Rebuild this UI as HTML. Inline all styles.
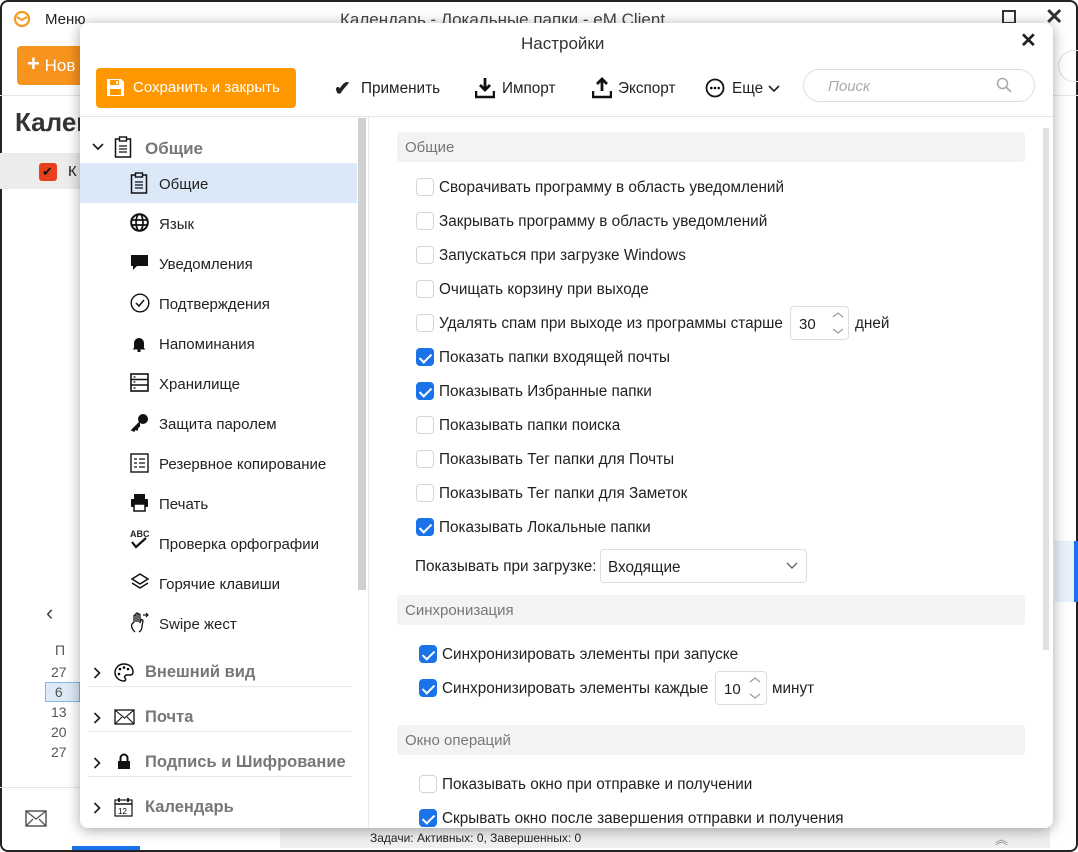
<!DOCTYPE html>
<html><head><meta charset="utf-8"><style>
*{box-sizing:border-box;margin:0;padding:0}
body{width:1078px;height:852px;position:relative;overflow:hidden;background:#fff;font-family:"Liberation Sans","Noto Sans CJK SC",sans-serif;color:#222;font-size:15px}
.a{position:absolute;white-space:nowrap}
.cb{position:absolute;width:18px;height:18px;border:1px solid #d4d4d4;border-radius:4px;background:#fff}
.cb.on{background:#1a73e8;border-color:#1a73e8}
.cb.on:after{content:"";position:absolute;left:5px;top:1.5px;width:5px;height:10px;border:solid #fff;border-width:0 2.2px 2.2px 0;transform:rotate(45deg)}
.sec{position:absolute;left:397px;width:628px;height:30px;background:#f3f3f3;border-radius:3px;color:#777;font-size:15px;padding:7px 8px}
.ni{position:absolute;left:159px;font-size:15px}
.ic{position:absolute;left:130px}
.grp{position:absolute;left:145px;font-size:17px;color:#777;font-weight:bold}
.gl{position:absolute;left:88px;width:264px;height:1px;background:#e6e6e6}
.sp{position:absolute;width:52px;height:34px;border:1px solid #ddd;border-radius:4px;padding:9px 0 0 8px;font-size:15px;background:#fff}
.t{font-size:15.3px}
</style></head><body>
<!-- background app -->
<div class="a" style="left:0;top:0;width:1078px;height:852px;border:2px solid #222;border-radius:8px"></div>
<svg class="a" style="left:13px;top:10px" width="18" height="18" viewBox="0 0 18 18"><circle cx="9" cy="9" r="7" fill="none" stroke="#f29b1f" stroke-width="2.2"/><path d="M4 7l5 3 5-3" fill="none" stroke="#f29b1f" stroke-width="2"/></svg>
<div class="a" style="left:45px;top:11px;font-size:15px">Меню</div>
<div class="a" style="left:340px;top:10px;font-size:17px;color:#444">Календарь - Локальные папки - eM Client</div>
<div class="a" style="left:1002px;top:10px;width:14px;height:14px;border:2px solid #333"></div>
<div class="a" style="left:1045px;top:4px;font-size:22px;font-weight:bold;color:#333">✕</div>
<div class="a" style="left:17px;top:46px;width:70px;height:39px;background:#f7941d;border-radius:4px;color:#fff;font-size:17px;padding:10px 0 0 10px"><b style="font-size:22px;line-height:14px">+</b> Нов</div>
<div class="a" style="left:0;top:95px;width:80px;height:1px;background:#e5e5e5"></div>
<div class="a" style="left:15px;top:107px;font-size:26px;font-weight:bold;color:#333">Кален</div>
<div class="a" style="left:0;top:153px;width:80px;height:36px;background:#ececec"></div>
<div class="a" style="left:39px;top:163px;width:18px;height:18px;background:#e8401c;border-radius:3px;color:#111;font-size:13px;padding-left:3px;line-height:18px">✔</div>
<div class="a" style="left:68px;top:163px;font-size:15px">К</div>
<div class="a" style="left:46px;top:600px;font-size:22px;color:#444">‹</div>
<div class="a" style="left:55px;top:642px;font-size:14px;color:#555">П</div>
<div class="a" style="left:45px;top:682px;width:35px;height:20px;background:#dce9f7;border:1px solid #8ab4e8"></div>
<div class="a" style="left:51px;top:662px;font-size:14px;color:#555;line-height:20px">27<br>&nbsp;6<br>13<br>20<br>27</div>
<div class="a" style="left:0;top:787px;width:80px;height:1px;background:#e5e5e5"></div>
<svg class="a" style="left:25px;top:810px" width="22" height="18"><rect x="1" y="1" width="20" height="15" fill="none" stroke="#555" stroke-width="1.5"/><path d="M1 1l10 8 10-8M1 16l7-7M21 16l-7-7" fill="none" stroke="#555" stroke-width="1.3"/></svg>
<div class="a" style="left:72px;top:846px;width:68px;height:4px;background:#1a73e8"></div>
<div class="a" style="left:280px;top:826px;width:770px;height:22px;background:#f0f0f0;border-top:1px solid #ddd"></div>
<div class="a" style="left:370px;top:831px;font-size:12px;color:#222">Задачи: Активных: 0, Завершенных: 0</div>
<div class="a" style="left:995px;top:829px;font-size:13px;color:#888">︽</div>
<div class="a" style="left:1053px;top:95px;width:25px;height:1px;background:#e5e5e5"></div>
<div class="a" style="left:1058px;top:50px;width:20px;height:32px;border:1px solid #ddd;border-right:none;border-radius:16px 0 0 16px"></div>
<div class="a" style="left:1055px;top:541px;width:23px;height:61px;background:#e8f0fb;border-right:4px solid #1a73e8"></div>
<!-- dialog -->
<div class="a" style="left:80px;top:23px;width:973px;height:805px;background:#fff;border-radius:8px;box-shadow:0 2px 14px rgba(0,0,0,.35)"></div>
<div class="a" style="left:521px;top:34px;font-size:17px;color:#333">Настройки</div>
<div class="a" style="left:1020px;top:28px;font-size:20px;font-weight:bold;color:#222">✕</div>
<div class="a" style="left:96px;top:68px;width:200px;height:40px;background:#ff9800;border-radius:4px;color:#fff;font-size:15px;padding:11px 0 0 37px">Сохранить и закрыть</div>
<svg class="a" style="left:106px;top:78px" width="19" height="19" viewBox="0 0 19 19"><path d="M1 1h14l3 3v14H1z" fill="#fff"/><rect x="4" y="2" width="9" height="5" fill="#ff9800"/><rect x="4" y="11" width="11" height="6" fill="#ff9800"/><rect x="10" y="3" width="2" height="3" fill="#fff"/></svg>
<div class="a" style="left:334px;top:76px;font-size:20px;font-weight:bold">✔</div>
<div class="a t" style="left:361px;top:80px">Применить</div>
<svg class="a" style="left:475px;top:77px" width="20" height="22"><path d="M10 1v11M5 8l5 5 5-5" fill="none" stroke="#111" stroke-width="2.8"/><path d="M1 14v6h18v-6" fill="none" stroke="#111" stroke-width="2.5"/></svg>
<div class="a t" style="left:502px;top:80px">Импорт</div>
<svg class="a" style="left:592px;top:77px" width="20" height="22"><path d="M10 14V3M5 7l5-5 5 5" fill="none" stroke="#111" stroke-width="2.8"/><path d="M1 14v6h18v-6" fill="none" stroke="#111" stroke-width="2.5"/></svg>
<div class="a t" style="left:618px;top:80px">Экспорт</div>
<svg class="a" style="left:705px;top:78px" width="20" height="20"><circle cx="10" cy="10" r="8.5" fill="none" stroke="#111" stroke-width="1.8"/><circle cx="6.3" cy="10" r="1.3"/><circle cx="10" cy="10" r="1.3"/><circle cx="13.7" cy="10" r="1.3"/></svg>
<div class="a t" style="left:732px;top:80px">Еще</div>
<svg class="a" style="left:768px;top:85px" width="12" height="8"><path d="M1 1l5 5 5-5" fill="none" stroke="#222" stroke-width="1.6"/></svg>
<div class="a" style="left:803px;top:69px;width:232px;height:33px;border:1px solid #ddd;border-radius:17px;padding:8px 0 0 24px;font-style:italic;color:#aaa;font-size:15px">Поиск</div>
<svg class="a" style="left:996px;top:77px" width="16" height="16"><circle cx="6.5" cy="6.5" r="5" fill="none" stroke="#aaa" stroke-width="1.5"/><path d="M10 10l5 5" stroke="#aaa" stroke-width="1.6"/></svg>
<div class="a" style="left:80px;top:116px;width:973px;height:1px;background:#e5e5e5"></div>
<!-- sidebar -->
<div class="a" style="left:358px;top:118px;width:8px;height:472px;background:#d0d0d0"></div>
<div class="a" style="left:368px;top:117px;width:1px;height:711px;background:#e8e8e8"></div>
<svg class="a" style="left:92px;top:143px" width="12" height="8"><path d="M1 1l5 5 5-5" fill="none" stroke="#222" stroke-width="1.7"/></svg>
<svg class="a" style="left:114px;top:136px" width="18" height="22"><rect x="1.5" y="3" width="15" height="18" fill="none" stroke="#111" stroke-width="1.5"/><rect x="5.5" y="1" width="7" height="4" fill="#fff" stroke="#111" stroke-width="1.4"/><path d="M5 10h8M5 13h8M5 16h8" stroke="#111" stroke-width="1.3"/></svg>
<div class="grp" style="top:139px">Общие</div>
<div class="a" style="left:80px;top:163px;width:277px;height:40px;background:#dbe8f8"></div>
<svg class="ic" style="top:172px" width="18" height="22"><rect x="1.5" y="3" width="15" height="18" fill="none" stroke="#111" stroke-width="1.5"/><rect x="5.5" y="1" width="7" height="4" fill="#dbe8f8" stroke="#111" stroke-width="1.4"/><path d="M5 10h8M5 13h8M5 16h8" stroke="#111" stroke-width="1.3"/></svg>
<div class="ni" style="top:176px">Общие</div>
<svg class="ic" style="top:213px" width="19" height="19"><circle cx="9.5" cy="9.5" r="8.3" fill="none" stroke="#111" stroke-width="2"/><ellipse cx="9.5" cy="9.5" rx="3.5" ry="8.3" fill="none" stroke="#111" stroke-width="1.7"/><path d="M1 7h17M1 12h17" stroke="#111" stroke-width="1.7"/></svg>
<div class="ni" style="top:216px">Язык</div>
<svg class="ic" style="top:254px" width="19" height="19"><path d="M1 1h17v11H7l-4 4v-4H1z" fill="#111"/></svg>
<div class="ni" style="top:256px">Уведомления</div>
<svg class="ic" style="top:293px" width="20" height="20"><circle cx="10" cy="10" r="8.8" fill="none" stroke="#111" stroke-width="1.4"/><path d="M6 10l3 3 5-6" fill="none" stroke="#111" stroke-width="1.5"/></svg>
<div class="ni" style="top:296px">Подтверждения</div>
<svg class="ic" style="top:335px" width="18" height="18"><path d="M4 13V8a5 5 0 0 1 10 0v5l1.5 1.5h-13z" fill="#111"/><rect x="7.5" y="14" width="3" height="3" fill="#111"/></svg>
<div class="ni" style="top:336px">Напоминания</div>
<svg class="ic" style="top:373px" width="19" height="19"><rect x="1" y="1" width="17" height="17" fill="none" stroke="#111" stroke-width="1.6"/><path d="M1 6.5h17M1 12h17" stroke="#111" stroke-width="1.4"/><path d="M3.5 4h2M3.5 9h2M3.5 15h2" stroke="#111" stroke-width="1.3"/></svg>
<div class="ni" style="top:376px">Хранилище</div>
<svg class="ic" style="top:413px" width="19" height="19"><circle cx="13" cy="6" r="5" fill="#111"/><path d="M10 9L2 17l2 1 1-2 2 1 1-3 2-1" fill="#111" stroke="#111" stroke-width="1.5"/></svg>
<div class="ni" style="top:416px">Защита паролем</div>
<svg class="ic" style="top:452px" width="19" height="22"><rect x="1" y="2" width="17" height="18" fill="none" stroke="#111" stroke-width="1.4"/><path d="M4 7h3M4 11h3M4 15h3M9 7h6M9 11h6M9 15h6" stroke="#111" stroke-width="1.3"/></svg>
<div class="ni" style="top:456px">Резервное копирование</div>
<svg class="ic" style="top:493px" width="19" height="19"><rect x="4" y="1" width="11" height="5" fill="#111"/><rect x="1" y="6" width="17" height="8" rx="1" fill="#111"/><rect x="4" y="11" width="11" height="7" fill="#fff" stroke="#111" stroke-width="1.5"/></svg>
<div class="ni" style="top:496px">Печать</div>
<div class="a" style="left:130px;top:529px;font-size:9px;font-weight:bold">ABC</div>
<svg class="ic" style="top:537px" width="20" height="14"><path d="M2 5l4 5 10-9" fill="none" stroke="#111" stroke-width="2.2"/></svg>
<div class="ni" style="top:536px">Проверка орфографии</div>
<svg class="ic" style="top:572px" width="20" height="20"><path d="M10 2l8 5-8 5-8-5z" fill="none" stroke="#111" stroke-width="1.5"/><path d="M2 11l8 5 8-5" fill="none" stroke="#111" stroke-width="1.5"/></svg>
<div class="ni" style="top:576px">Горячие клавиши</div>
<svg class="ic" style="top:612px" width="20" height="22"><path d="M5 20c-3-3-4-6-3-8l2-2V4a1 1 0 0 1 2 0v6V2a1 1 0 0 1 2 0v8V3a1 1 0 0 1 2 0v8l1-3c1-1 2 0 2 1l-1 5c0 3-1 5-3 6" fill="none" stroke="#111" stroke-width="1.3"/><path d="M13 3h5M16 1l2 2-2 2" fill="none" stroke="#111" stroke-width="1.2"/></svg>
<div class="ni" style="top:616px">Swipe жест</div>
<svg class="a" style="left:93px;top:667px" width="8" height="12"><path d="M1.5 1l5 5-5 5" fill="none" stroke="#222" stroke-width="1.7"/></svg>
<svg class="a" style="left:114px;top:663px" width="20" height="19"><path d="M10 1a9 8.5 0 1 0 0 17c2 0 2-2 1-3s0-3 2-3h3c2 0 3-1 3-3C19 4 15 1 10 1z" fill="none" stroke="#111" stroke-width="1.5"/><circle cx="6" cy="6" r="1.3"/><circle cx="10" cy="4.5" r="1.3"/><circle cx="14" cy="6" r="1.3"/><circle cx="5" cy="11" r="1.3"/></svg>
<div class="grp" style="top:663px;font-size:16.5px">Внешний вид</div>
<div class="gl" style="top:686px"></div>
<svg class="a" style="left:93px;top:712px" width="8" height="12"><path d="M1.5 1l5 5-5 5" fill="none" stroke="#222" stroke-width="1.7"/></svg>
<svg class="a" style="left:114px;top:709px" width="21" height="16"><rect x="1" y="1" width="19" height="14" fill="none" stroke="#111" stroke-width="1.3"/><path d="M1 1l9.5 8 9.5-8M1 15l7-7M20 15l-7-7" fill="none" stroke="#111" stroke-width="1.1"/></svg>
<div class="grp" style="top:708px;font-size:16.5px">Почта</div>
<div class="gl" style="top:731px"></div>
<svg class="a" style="left:93px;top:757px" width="8" height="12"><path d="M1.5 1l5 5-5 5" fill="none" stroke="#222" stroke-width="1.7"/></svg>
<svg class="a" style="left:117px;top:753px" width="14" height="17"><path d="M3.5 8V5a3.5 3.5 0 0 1 7 0v3" fill="none" stroke="#111" stroke-width="2"/><rect x="1" y="8" width="12" height="8" fill="#111"/></svg>
<div class="grp" style="top:753px;font-size:16.5px">Подпись и Шифрование</div>
<div class="gl" style="top:776px"></div>
<svg class="a" style="left:93px;top:802px" width="8" height="12"><path d="M1.5 1l5 5-5 5" fill="none" stroke="#222" stroke-width="1.7"/></svg>
<svg class="a" style="left:113px;top:797px" width="22" height="22"><rect x="2" y="3" width="17" height="16" fill="none" stroke="#111" stroke-width="1.2"/><path d="M2 7h17" stroke="#111" stroke-width="1.5"/><path d="M6 1v4M15 1v4" stroke="#111" stroke-width="1.8"/><text x="5" y="17" font-size="8" font-family="Liberation Sans">12</text></svg>
<div class="grp" style="top:798px;font-size:16.5px">Календарь</div>
<!-- content -->
<div class="a" style="left:1043px;top:128px;width:6px;height:522px;background:#e0e0e0"></div>
<div class="sec" style="top:132px">Общие</div>
<div class="cb" style="left:416px;top:178px"></div><div class="a t" style="left:439px;top:179px">Сворачивать программу в область уведомлений</div>
<div class="cb" style="left:416px;top:212px"></div><div class="a t" style="left:439px;top:213px">Закрывать программу в область уведомлений</div>
<div class="cb" style="left:416px;top:246px"></div><div class="a t" style="left:439px;top:247px">Запускаться при загрузке Windows</div>
<div class="cb" style="left:416px;top:280px"></div><div class="a t" style="left:439px;top:281px">Очищать корзину при выходе</div>
<div class="cb" style="left:416px;top:314px"></div><div class="a t" style="left:439px;top:315px">Удалять спам при выходе из программы старше</div>
<div class="sp" style="left:790px;top:306px;width:59px">30</div>
<svg class="a" style="left:832px;top:311px" width="12" height="24"><path d="M1 6l5-4 5 4M1 18l5 4 5-4" fill="none" stroke="#999" stroke-width="1.2"/></svg>
<div class="a t" style="left:855px;top:315px">дней</div>
<div class="cb on" style="left:416px;top:348px"></div><div class="a t" style="left:439px;top:349px">Показать папки входящей почты</div>
<div class="cb on" style="left:416px;top:382px"></div><div class="a t" style="left:439px;top:383px">Показывать Избранные папки</div>
<div class="cb" style="left:416px;top:416px"></div><div class="a t" style="left:439px;top:417px">Показывать папки поиска</div>
<div class="cb" style="left:416px;top:450px"></div><div class="a t" style="left:439px;top:451px">Показывать Тег папки для Почты</div>
<div class="cb" style="left:416px;top:484px"></div><div class="a t" style="left:439px;top:485px">Показывать Тег папки для Заметок</div>
<div class="cb on" style="left:416px;top:518px"></div><div class="a t" style="left:439px;top:519px">Показывать Локальные папки</div>
<div class="a t" style="left:415px;top:558px">Показывать при загрузке:</div>
<div class="a" style="left:600px;top:549px;width:207px;height:34px;border:1px solid #ddd;border-radius:4px;padding:9px 0 0 7px;font-size:15.3px">Входящие</div>
<svg class="a" style="left:786px;top:562px" width="12" height="8"><path d="M1 1l5 5 5-5" fill="none" stroke="#666" stroke-width="1.4"/></svg>
<div class="sec" style="top:595px">Синхронизация</div>
<div class="cb on" style="left:419px;top:645px"></div><div class="a t" style="left:442px;top:646px">Синхронизировать элементы при запуске</div>
<div class="cb on" style="left:419px;top:679px"></div><div class="a t" style="left:442px;top:680px">Синхронизировать элементы каждые</div>
<div class="sp" style="left:715px;top:671px">10</div>
<svg class="a" style="left:749px;top:676px" width="12" height="24"><path d="M1 6l5-4 5 4M1 18l5 4 5-4" fill="none" stroke="#999" stroke-width="1.2"/></svg>
<div class="a t" style="left:772px;top:680px">минут</div>
<div class="sec" style="top:725px">Окно операций</div>
<div class="cb" style="left:419px;top:775px"></div><div class="a t" style="left:442px;top:776px">Показывать окно при отправке и получении</div>
<div class="cb on" style="left:419px;top:809px"></div><div class="a t" style="left:442px;top:810px">Скрывать окно после завершения отправки и получения</div>
</body></html>
